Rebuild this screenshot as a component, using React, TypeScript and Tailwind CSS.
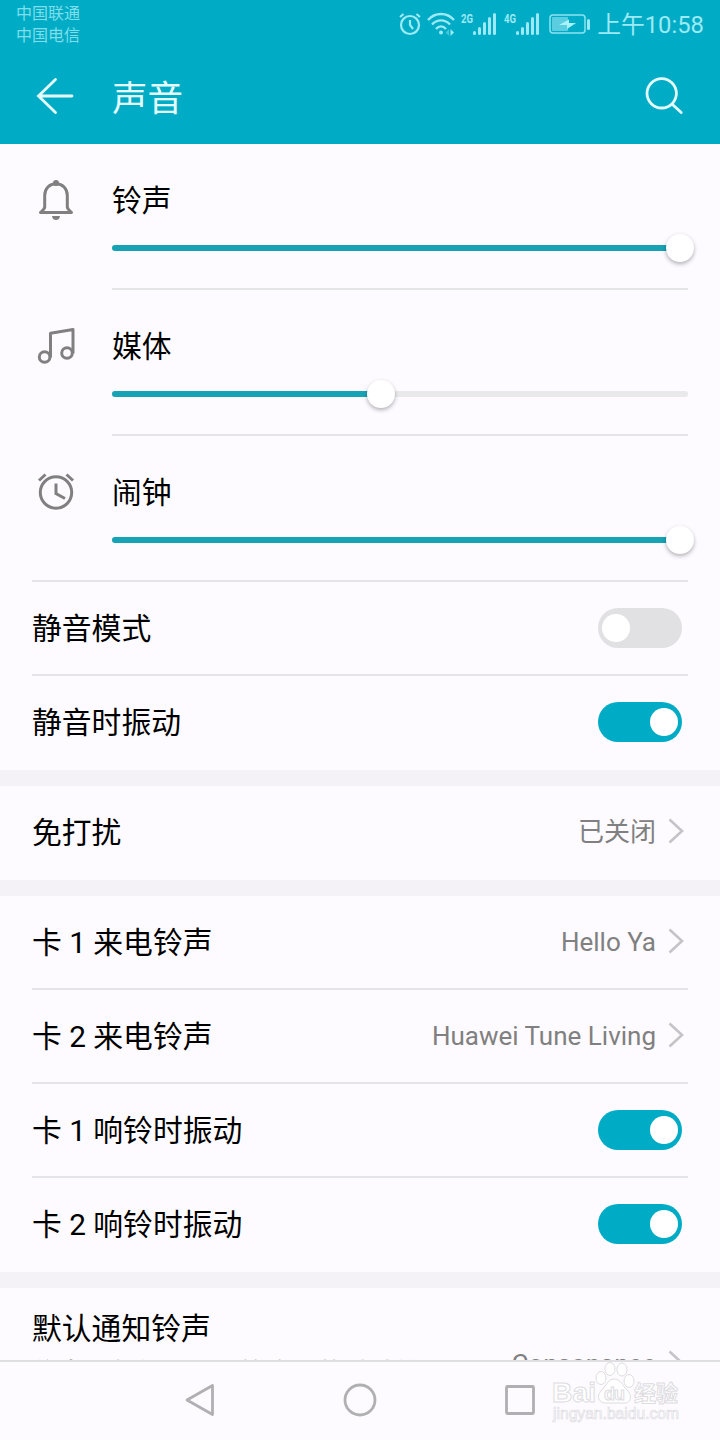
import type { ReactNode } from "react";

/* ================= TYPES ================= */

type Volume = {
  label: string;
  value: number;
  icon: ReactNode;
};

type Row = {
  label: string;
  value?: string;
  on?: boolean;
};

/* ================= ICONS ================= */

const BellIcon = () => (
  <svg width="40" height="44" viewBox="0 0 40 44" fill="none" stroke="#808080" strokeWidth="3">
    <path d="M8.700 29V17.500C8.700 10.500 13.500 5.700 20 5.700S31.300 10.500 31.300 17.500V29C31.300 31 33.500 32.500 35.500 34.500H4.500C6.500 32.500 8.700 31 8.700 29Z" strokeLinejoin="round" />
    <circle cx="20" cy="5" r="3" fill="#808080" stroke="none" />
    <path d="M16 38H24C23.500 41 22 42 20 42S16.500 41 16 38Z" fill="#808080" stroke="none" />
  </svg>
);

const MusicIcon = () => (
  <svg className="mt-0.5" width="40" height="40" viewBox="0 0 40 40" fill="none" stroke="#808080" strokeWidth="3">
    <circle cx="8.600" cy="31" r="5.300" />
    <circle cx="31" cy="27" r="5.300" />
    <path d="M14.500 31.500V7.300L37 3.500V27.500" strokeLinejoin="round" />
  </svg>
);

const ClockIcon = () => (
  <svg className="mt-0.5" width="40" height="40" viewBox="0 0 40 40" fill="none" stroke="#808080" strokeWidth="3">
    <circle cx="20" cy="20.500" r="15.700" />
    <path d="M20 11.500V21.500L29 26.500" />
    <path d="M3 8.500L9.500 2.500M37 8.500L30.500 2.500" />
  </svg>
);

const Chevron = () => (
  <svg className="mb-0.5 ml-3 shrink-0" width="16" height="28" viewBox="0 0 16 28" fill="none" stroke="#c4c4c6" strokeWidth="2.600">
    <path d="M1.500 2.500L14 14L1.500 25.500" />
  </svg>
);

const Signal = ({ type }: { type: string }) => (
  <svg width="36" height="28" viewBox="0 0 36 28" fill="#9ceaf5">
    <text x="0" y="11" fontSize="13" fontWeight="700" textLength="12" lengthAdjust="spacingAndGlyphs">
      {type}
    </text>
    <rect x="12" y="19" width="3" height="4" rx="1.500" />
    <rect x="17" y="15" width="3" height="8" rx="1.500" />
    <rect x="22" y="10" width="3" height="13" rx="1.500" />
    <rect x="27" y="5" width="3" height="18" rx="1.500" />
    <rect x="32" y="1" width="3" height="22" rx="1.500" />
  </svg>
);

/* ================= DATA ================= */

const VOLUMES: Volume[] = [
  { label: "铃声", value: 568, icon: <BellIcon /> },
  { label: "媒体", value: 269, icon: <MusicIcon /> },
  { label: "闹钟", value: 568, icon: <ClockIcon /> },
];

const GROUPS: Row[][] = [
  [
    { label: "静音模式", on: false },
    { label: "静音时振动", on: true },
  ],
  [{ label: "免打扰", value: "已关闭" }],
  [
    { label: "卡 1 来电铃声", value: "Hello Ya" },
    { label: "卡 2 来电铃声", value: "Huawei Tune Living" },
    { label: "卡 1 响铃时振动", on: true },
    { label: "卡 2 响铃时振动", on: true },
  ],
];

/* ================= PARTS ================= */

function StatusBar() {
  return (
    <div className="flex h-12 items-start justify-between pl-4 pr-4 text-[#9ceaf5]">
      <div className="pt-[3px] text-base leading-[22px] text-[#7fdeec]">
        <p>中国联通</p>
        <p>中国电信</p>
      </div>
      <div className="flex items-start pt-3">
        <svg width="24" height="24" viewBox="0 0 24 24" fill="none" stroke="#9ceaf5" strokeWidth="2.200">
          <circle cx="12" cy="13" r="9" />
          <path d="M12 8V13L15 17M2 5L5.500 2M22 5L18.500 2" />
        </svg>
        <svg className="ml-[5px]" width="28" height="24" viewBox="0 0 28 24" fill="none" stroke="#9ceaf5" strokeWidth="2.400">
          <path d="M1 8C8 0 20 0 27 8M5 12.500C10 7 18 7 23 12.500M9 17C12 13.500 16 13.500 19 17" />
          <circle cx="14" cy="20.500" r="2" fill="#9ceaf5" stroke="none" />
          <path d="M23.500 17V24L27 20.500Z" fill="#9ceaf5" stroke="none" />
          <path d="M22 17V24L18.500 20.500Z" fill="#45c5d8" stroke="none" />
        </svg>
        <div className="ml-1.5 flex gap-[7px]">
          <Signal type="2G" />
          <Signal type="4G" />
        </div>
        <svg className="ml-[9px]" width="42" height="24" viewBox="0 0 42 24" fill="none">
          <rect x="1" y="3" width="35" height="18" rx="3" stroke="#8be3f0" strokeWidth="1.500" />
          <rect x="3" y="5" width="16" height="14" rx="1" fill="#5acde0" />
          <path d="M10 13L20 7.500V11H27L18 17V13Z" fill="#a8f3fb" />
          <rect x="38" y="7" width="3" height="11" rx="1.500" fill="#9ceaf5" />
        </svg>
        <span className="ml-1.5 text-[23.800px] leading-[27px] whitespace-nowrap">上午10:58</span>
      </div>
    </div>
  );
}

function Toolbar() {
  return (
    <div className="flex h-24 items-center px-9 text-[#e4feff]">
      <svg width="38" height="38" viewBox="0 0 38 38" fill="none" stroke="currentColor" strokeWidth="2.800" strokeLinecap="round">
        <path d="M19.500 2.500L2.500 19L19.500 35.500M2.500 19H36" />
      </svg>
      <h1 className="ml-[38px] flex-1 pt-[5px] text-[35.500px] leading-[40px]">声音</h1>
      <svg width="40" height="40" viewBox="0 0 40 40" fill="none" stroke="currentColor" strokeWidth="2.800" strokeLinecap="round">
        <circle cx="17.700" cy="17.300" r="14.700" />
        <path d="M28.500 28.500L37.200 36.500" />
      </svg>
    </div>
  );
}

function VolumeRow({ volume }: { volume: Volume }) {
  return (
    <div className="flex h-36 pt-[34px] pr-8 pl-9">
      <div className="w-[76px] shrink-0">{volume.icon}</div>
      <div className="flex-1">
        <p className="pt-px text-[29.800px] leading-[44px]">{volume.label}</p>
        <div className="mt-[22px] h-1.5 rounded-full bg-[#e9e8eb]">
          <div className="relative h-1.5 rounded-full bg-[#17a3b6]" style={{ width: volume.value }}>
            <span className="absolute -top-[11px] -right-[14px] size-7 rounded-full bg-white shadow-[0_2px_4px_rgba(0,0,0,0.3)]" />
          </div>
        </div>
      </div>
    </div>
  );
}

function Switch({ on }: { on: boolean }) {
  return (
    <span
      className={
        on
          ? "mr-1.5 flex h-10 w-[84px] items-center justify-end rounded-full bg-[#00acc5] px-1"
          : "mr-1.5 flex h-10 w-[84px] items-center rounded-full bg-[#e1e0e3] px-1"
      }
    >
      <span className="size-7 rounded-full bg-white" />
    </span>
  );
}

function SettingRow({ row, last }: { row: Row; last: boolean }) {
  return (
    <div
      className={
        last
          ? "mx-8 flex h-[94px] items-center justify-between pb-0.5"
          : "mx-8 flex h-[94px] items-center justify-between border-b-2 border-[#e4e3e6]"
      }
    >
      <span className="pt-px text-[29.800px] leading-[44px]">{row.label}</span>
      {row.value ? (
        <span className="mr-1 flex items-center text-[26px] leading-9 text-[#808080]">
          {row.value}
          <Chevron />
        </span>
      ) : (
        <Switch on={!!row.on} />
      )}
    </div>
  );
}

function NavBar() {
  return (
    <nav className="relative flex h-20 items-center border-t-2 border-[#dfdee0] bg-[#fdfbff] pl-[184px]">
      <svg width="352" height="36" viewBox="0 0 352 36" fill="none" stroke="#b0afb1" strokeWidth="2.800" strokeLinejoin="round">
        <path d="M3 17L28.500 2.500V31.500Z" />
        <circle cx="176" cy="17" r="15" />
        <rect x="322.500" y="3.500" width="27" height="27" rx="1" />
      </svg>
      <Watermark />
    </nav>
  );
}

function Watermark() {
  return (
    <svg
      className="absolute right-9 bottom-4 h-[66px] w-[132px] font-['Liberation_Sans','Noto_Sans_CJK_SC',sans-serif]"
      viewBox="0 0 132 66"
      fill="#fff"
      stroke="#dddcdf"
      strokeWidth="1"
    >
      <text x="0" y="44" fontSize="28" fontWeight="700" textLength="44" lengthAdjust="spacingAndGlyphs">Bai</text>
      <ellipse cx="49" cy="20" rx="5" ry="6.500" />
      <ellipse cx="58" cy="11" rx="5" ry="6.500" />
      <ellipse cx="70" cy="11.500" rx="5" ry="6.500" />
      <ellipse cx="77" cy="23" rx="5" ry="6.500" />
      <path d="M62 21C56 21 54 28 49 33C43 40 49 46 55 45H71C78 46 81 39 76 33C70 27 69 21 62 21Z" />
      <text x="52" y="42" fontSize="18" fontWeight="700" textLength="21">du</text>
      <text x="82" y="43" fontSize="22" fontWeight="700" textLength="44">经验</text>
      <text x="1" y="61" fontSize="16" textLength="126" lengthAdjust="spacingAndGlyphs" strokeWidth="0.700">jingyan.baidu.com</text>
    </svg>
  );
}

/* ================= PAGE ================= */

export default function App() {
  return (
    <main className="flex h-[1440px] w-[720px] flex-col overflow-hidden bg-[#fdfbff] font-[Roboto,'Noto_Sans_CJK_SC',sans-serif] text-black">
      <header className="shrink-0 bg-[#00acc5]">
        <StatusBar />
        <Toolbar />
      </header>

      <div className="flex-1 overflow-hidden">
        {VOLUMES.map((v, i) => (
          <div key={v.label}>
            <VolumeRow volume={v} />
            <div
              className={
                i === VOLUMES.length - 1
                  ? "mr-8 ml-8 h-0.5 bg-[#e4e3e6]"
                  : "mr-8 ml-28 h-0.5 bg-[#e4e3e6]"
              }
            />
          </div>
        ))}

        {GROUPS.map((group, i) => (
          <section key={i} className="border-b-16 border-[#f4f2f6]">
            {group.map((row, j) => (
              <SettingRow key={row.label} row={row} last={j === group.length - 1} />
            ))}
          </section>
        ))}

        {/* cut off by the navigation bar */}
        <div className="flex h-[152px] items-center justify-between pr-9 pl-8">
          <div className="w-[396px] pt-[5px]">
            <p className="text-[29.800px] leading-[44px]">默认通知铃声</p>
            <p className="mt-1 text-[26px] leading-9 text-[#808080]">信息、邮件、日历等应用的默认铃声</p>
          </div>
          <span className="flex items-center text-[26px] leading-9 text-[#808080]">
            Consonance
            <Chevron />
          </span>
        </div>
      </div>

      <NavBar />
    </main>
  );
}
